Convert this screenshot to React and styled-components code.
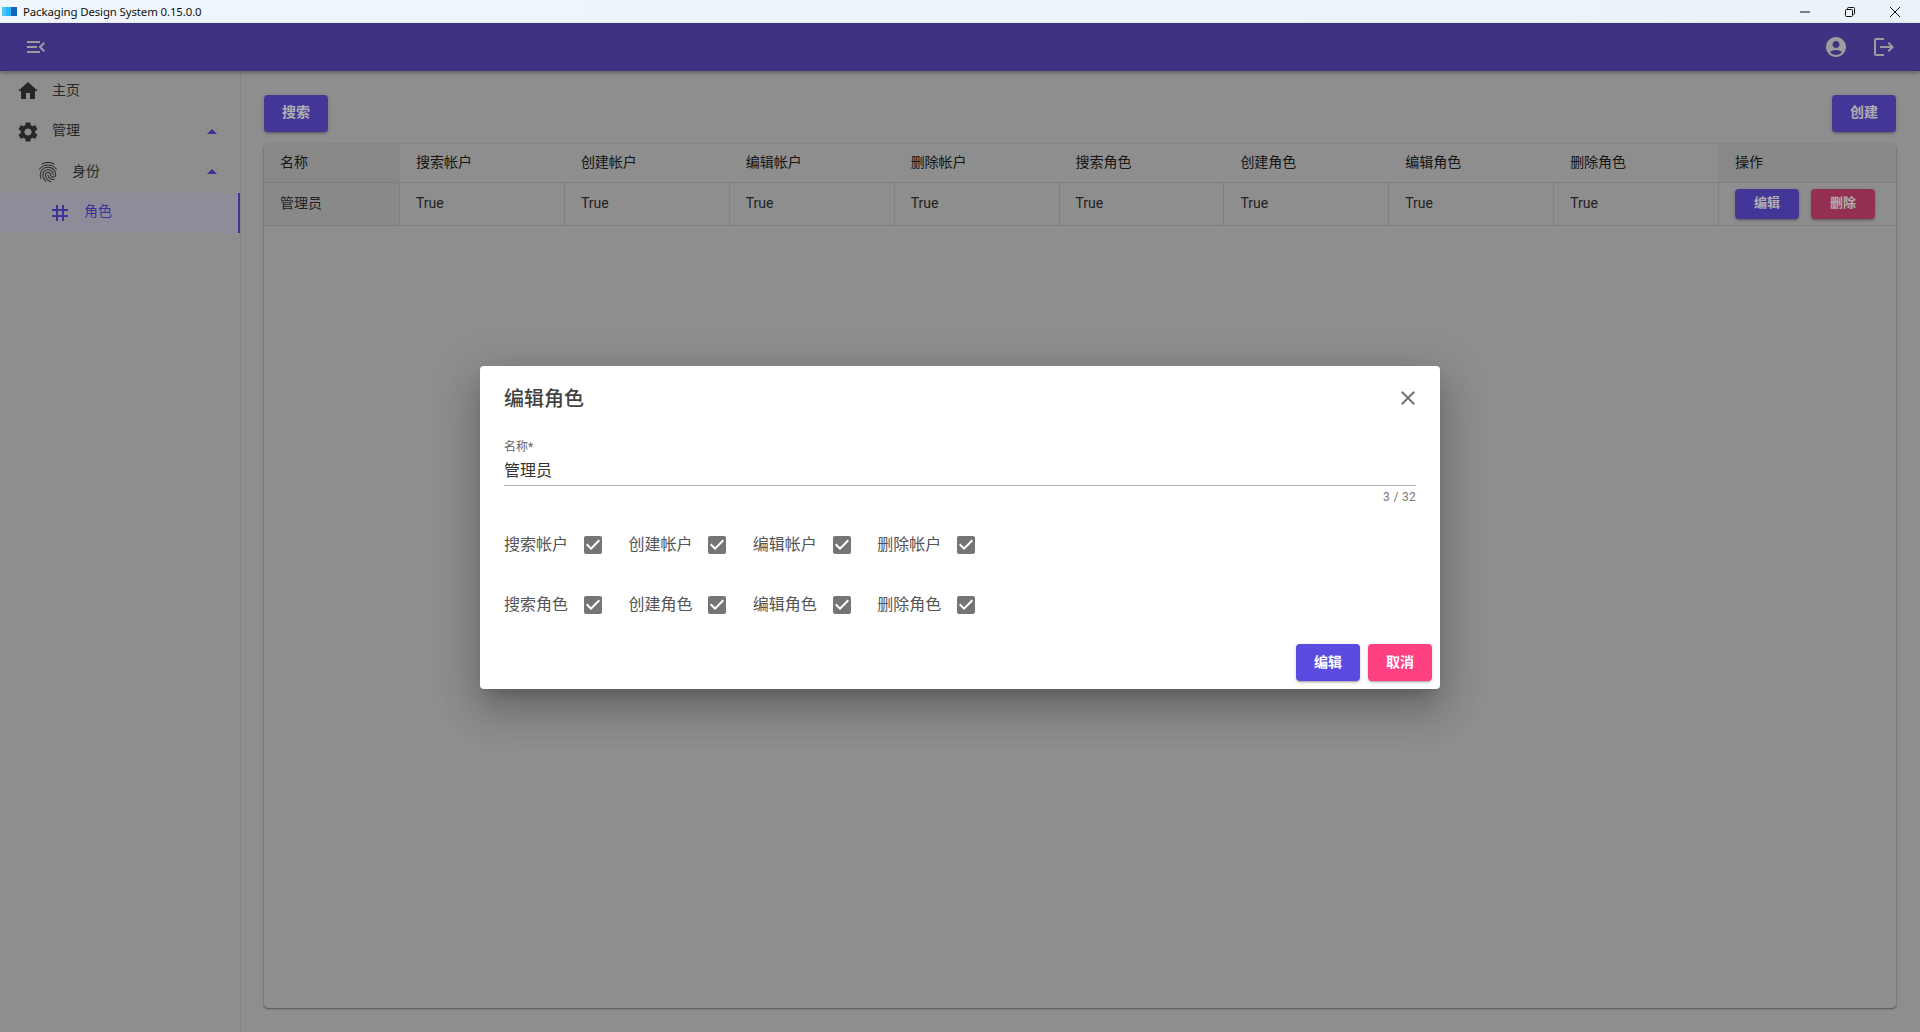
import React from 'react';
import styled, {createGlobalStyle} from 'styled-components';
import {
	MdAccountCircle, MdArrowDropUp, MdCheckBox, MdClose, MdFingerprint,
	MdHome, MdLogout, MdMenuOpen, MdSettings, MdTag
} from 'react-icons/md';

const GlobalStyle = createGlobalStyle`
  html, body, #root {
    margin: 0;
    height: 100%;
    overflow: hidden;
  }

  body {
    font-family: Roboto, "Noto Sans CJK SC", sans-serif;
    font-size: 14px;
    color: #333;
  }
`

const Page = styled.div`
  position: relative;
  display: flex;
  flex-direction: column;
  height: 1032px;
  background: #d1d1d1;
`

const TitleBar = styled.div`
  display: flex;
  align-items: center;
  flex: 0 0 23px;
  padding-left: 2px;
  background: linear-gradient(90deg, #eff6fc, #ebf3f8);
  font-family: "Noto Sans", sans-serif;
  font-size: 11.4px;
  color: #111;
`

const TitleText = styled.span`
  margin-left: 5px;
  letter-spacing: -0.1px;
`

const WindowButtons = styled.div`
  display: flex;
  align-items: center;
  margin-left: auto;
  padding-right: 20px;
  gap: 35px;
`

const Toolbar = styled.header`
  position: relative;
  z-index: 1;
  display: flex;
  align-items: center;
  flex: 0 0 48px;
  padding: 0 24px;
  background: #5c4cc0;
  color: #e6e6e6;
  box-shadow: 0 2px 4px rgba(0, 0, 0, .3);
`

const ToolbarRight = styled.div`
  display: flex;
  align-items: center;
  margin-left: auto;
  gap: 24px;
`

const Main = styled.div`
  display: flex;
  flex: 1;
  min-height: 0;
`

const Sidebar = styled.nav`
  flex: 0 0 240px;
  border-right: 1px solid #c4c4c4;
`

const NavItem = styled.div`
  display: flex;
  align-items: center;
  height: 40px;
  margin-bottom: ${p => p.$tight ? 0 : '0.6px'};
  padding-left: ${p => p.$indent}px;
  padding-right: 16px;
  color: ${p => p.$active ? '#5b4be0' : '#3a3a3a'};
  background: ${p => p.$active ? '#d0cee0' : 'transparent'};
  border-right: ${p => p.$active ? '2px solid #5b4be0' : 'none'};
`

const NavLabel = styled.span`
  flex: 1;
  margin-left: 12px;
  padding-bottom: 5px;
`

const Content = styled.section`
  display: flex;
  flex-direction: column;
  flex: 1;
  min-width: 0;
  padding: 24px 24px 24px 23px;
`

const Actions = styled.div`
  display: flex;
  justify-content: space-between;
  margin-bottom: 12px;
`

const Button = styled.button`
  width: 64px;
  height: ${p => p.$height || 37}px;
  padding: 0 0 4px;
  border: 0;
  border-radius: 4px;
  background: ${p => p.$danger ? '#ff4081' : '#5b4be0'};
  color: #fff;
  font-family: inherit;
  font-size: ${p => p.$small ? 13 : 14}px;
  font-weight: 700;
  box-shadow: 0 2px 2px -1px rgba(0, 0, 0, .3), 0 1px 4px rgba(0, 0, 0, .15);
`

const PageButton = styled(Button)`
  padding-bottom: 5px;
  background: ${p => p.$danger ? '#dc4679' : '#6250e2'};
`

const TableCard = styled.div`
  flex: 1;
  border-radius: 4px;
  background: #d1d1d1;
  box-shadow: 0 1px 2px rgba(0, 0, 0, .4), 0 0 1px rgba(0, 0, 0, .3);
  overflow: hidden;
`

const TableRow = styled.div`
  display: grid;
  grid-template-columns: 136px repeat(8, 164.875px) 1fr;
  box-sizing: border-box;
  height: ${p => p.$height}px;
  border-bottom: 1px solid #bcbcbc;
`

const HeadCell = styled.div`
  display: flex;
  align-items: center;
  padding: 0 0 5px 16px;
  color: #222;
  background: ${p => p.$sticky ? '#c9c9c9' : '#d1d1d1'};
`

const Cell = styled.div`
  display: flex;
  align-items: center;
  gap: 12px;
  padding: 0 0 ${p => p.$lift || 0}px 16px;
  color: #333;
  border-right: ${p => p.$last ? 'none' : '1px solid #bcbcbc'};
  background: ${p => p.$sticky ? '#cbcbcb' : 'transparent'};
`

const Overlay = styled.div`
  position: absolute;
  z-index: 2;
  top: 23px;
  left: 0;
  right: 0;
  bottom: 0;
  display: flex;
  align-items: center;
  justify-content: center;
  background: rgba(0, 0, 0, .32);
`

const Dialog = styled.div`
  display: flex;
  flex-direction: column;
  width: 960px;
  height: 323px;
  padding: 0 8px 8px 24px;
  box-sizing: border-box;
  border-radius: 4px;
  background: #fff;
  box-shadow: 0 11px 15px -7px rgba(0, 0, 0, .2), 0 24px 38px 3px rgba(0, 0, 0, .14), 0 9px 46px 8px rgba(0, 0, 0, .12);
`

const DialogHeader = styled.div`
  display: flex;
  align-items: center;
  justify-content: space-between;
  height: 62px;
  padding-right: 12px;
  color: #757575;

  svg {
    margin-top: 2px;
  }
`

const DialogTitle = styled.h2`
  margin: 0;
  font-size: 20px;
  font-weight: 500;
  color: #424242;
`

const Field = styled.div`
  margin: 12px 16px 0 0;
`

const FieldLabel = styled.div`
  font-size: 12px;
  line-height: 15px;
  color: #666;
`

const FieldValue = styled.div`
  box-sizing: border-box;
  height: 31px;
  font-size: 16px;
  line-height: 32px;
  color: #333;
  border-bottom: 1px solid #b5b5b5;
`

const Counter = styled.div`
  margin-top: 4px;
  font-size: 12px;
  line-height: 15px;
  letter-spacing: .3px;
  text-align: right;
  color: #777;
`

const CheckList = styled.div`
  margin-top: 10px;
`

const CheckRow = styled.div`
  display: flex;
  height: 60px;
  align-items: center;
`

const CheckItem = styled.label`
  display: flex;
  align-items: center;
  width: 124.4px;
  color: #555;
`

const CheckLabel = styled.span`
  width: 77px;
  font-size: 16px;
  padding-bottom: 4px;
`

const DialogFooter = styled.div`
  display: flex;
  justify-content: flex-end;
  gap: 8px;
  margin-top: auto;
`

const columns = ['搜索帐户', '创建帐户', '编辑帐户', '删除帐户', '搜索角色', '创建角色', '编辑角色', '删除角色']

const Logo = () => (
	<svg width="16" height="12" viewBox="0 0 16 12">
		<rect x="0" y="1" width="6" height="9" fill="#4fc3f7"/>
		<rect x="4" y="1" width="5" height="9" fill="#29b6f6"/>
		<rect x="9" y="1" width="6" height="9" fill="#1565c0"/>
	</svg>
)

const Minimize = () => (
	<svg width="10" height="10" viewBox="0 0 10 10"><path d="M0 5h10" stroke="#111"/></svg>
)

const Restore = () => (
	<svg width="10" height="10" viewBox="0 0 10 10" fill="none" stroke="#111">
		<rect x=".5" y="2.5" width="7" height="7" rx="1"/>
		<path d="M2.5 2.5V1.5a1 1 0 0 1 1-1h5a1 1 0 0 1 1 1v5a1 1 0 0 1-1 1h-1"/>
	</svg>
)

const CloseWindow = () => (
	<svg width="10" height="10" viewBox="0 0 10 10"><path d="M0 0l10 10M10 0L0 10" stroke="#111"/></svg>
)

const App = () => {
	const checkRows = [
		['搜索帐户', '创建帐户', '编辑帐户', '删除帐户'],
		['搜索角色', '创建角色', '编辑角色', '删除角色']
	]

	return (
		<Page>
			<GlobalStyle/>
			<TitleBar>
				<Logo/>
				<TitleText>Packaging Design System 0.15.0.0</TitleText>
				<WindowButtons>
					<Minimize/>
					<Restore/>
					<CloseWindow/>
				</WindowButtons>
			</TitleBar>
			<Toolbar>
				<MdMenuOpen size={24}/>
				<ToolbarRight>
					<MdAccountCircle size={24}/>
					<MdLogout size={24}/>
				</ToolbarRight>
			</Toolbar>
			<Main>
				<Sidebar>
					<NavItem $indent={16}>
						<MdHome size={24}/>
						<NavLabel>主页</NavLabel>
					</NavItem>
					<NavItem $indent={16}>
						<MdSettings size={24}/>
						<NavLabel>管理</NavLabel>
						<MdArrowDropUp size={24} color="#5b4be0"/>
					</NavItem>
					<NavItem $indent={36}>
						<MdFingerprint size={24}/>
						<NavLabel>身份</NavLabel>
						<MdArrowDropUp size={24} color="#5b4be0"/>
					</NavItem>
					<NavItem $indent={48} $active $tight>
						<MdTag size={24}/>
						<NavLabel>角色</NavLabel>
					</NavItem>
				</Sidebar>
				<Content>
					<Actions>
						<PageButton>搜索</PageButton>
						<PageButton>创建</PageButton>
					</Actions>
					<TableCard>
						<TableRow $height={39}>
							<HeadCell $sticky>名称</HeadCell>
							{columns.map(name => <HeadCell key={name}>{name}</HeadCell>)}
							<HeadCell $sticky>操作</HeadCell>
						</TableRow>
						<TableRow $height={43}>
							<Cell $sticky $lift={4}>管理员</Cell>
							{columns.map(name => <Cell key={name} $lift={2}>True</Cell>)}
							<Cell $last>
								<PageButton $small $height={30}>编辑</PageButton>
								<PageButton $small $height={30} $danger>删除</PageButton>
							</Cell>
						</TableRow>
					</TableCard>
				</Content>
			</Main>
			<Overlay>
				<Dialog>
					<DialogHeader>
						<DialogTitle>编辑角色</DialogTitle>
						<MdClose size={24}/>
					</DialogHeader>
					<Field>
						<FieldLabel>名称*</FieldLabel>
						<FieldValue>管理员</FieldValue>
						<Counter>3 / 32</Counter>
					</Field>
					<CheckList>
						{checkRows.map(row => (
							<CheckRow key={row[0]}>
								{row.map(name => (
									<CheckItem key={name}>
										<CheckLabel>{name}</CheckLabel>
										<MdCheckBox size={24} color="#757575"/>
									</CheckItem>
								))}
							</CheckRow>
						))}
					</CheckList>
					<DialogFooter>
						<Button>编辑</Button>
						<Button $danger>取消</Button>
					</DialogFooter>
				</Dialog>
			</Overlay>
		</Page>
	)
}

export default App
